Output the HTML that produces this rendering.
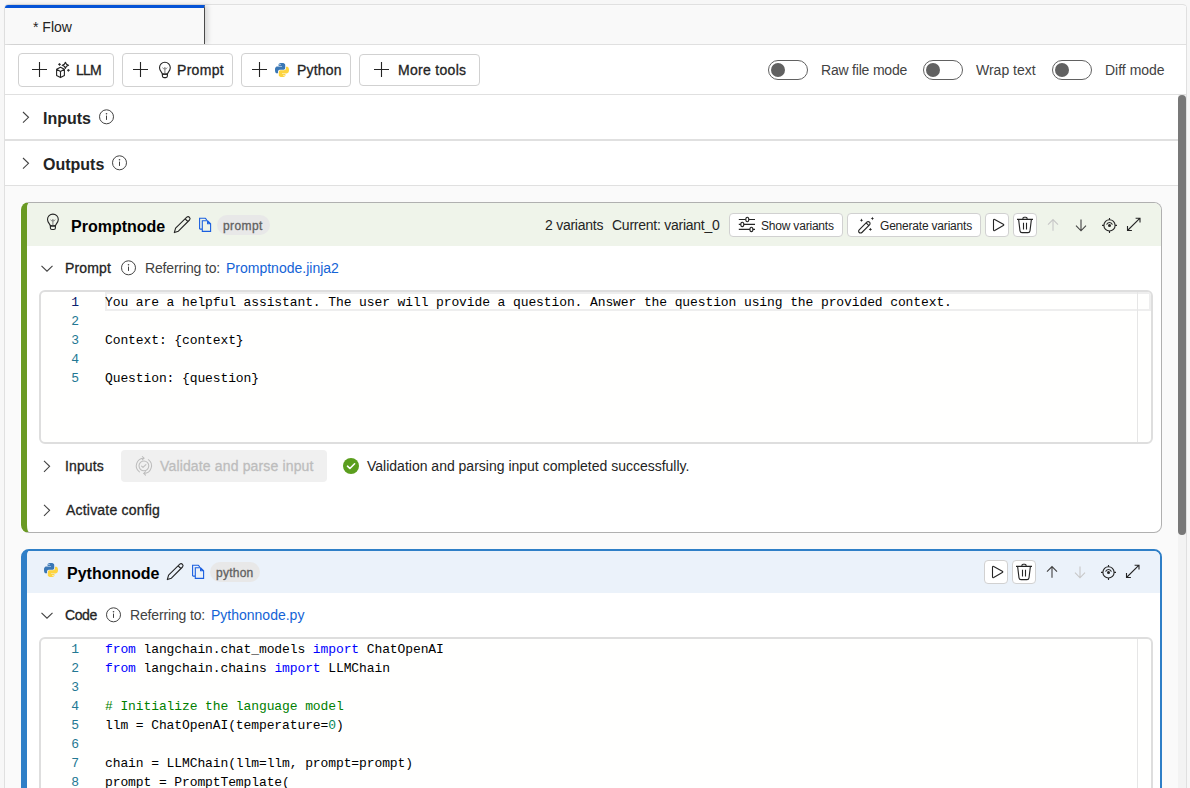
<!DOCTYPE html>
<html><head><meta charset="utf-8">
<style>
*{box-sizing:border-box;margin:0;padding:0}
html,body{width:1190px;height:788px;overflow:hidden;background:#f7f7f7;font-family:"Liberation Sans",sans-serif;color:#242424;position:relative}
.a{position:absolute}
.t{position:absolute;white-space:nowrap;line-height:1;font-size:14px}
.b16{font-size:16px;font-weight:bold;color:#242424}
.s12{font-size:12px}
.sb{-webkit-text-stroke:0.3px currentColor}
svg{position:absolute;overflow:visible}
.btn{position:absolute;border:1px solid #d1d1d1;border-radius:4px;background:#fff}
.tg{position:absolute;top:60px;width:40px;height:20px;border:1px solid #616161;border-radius:10px;background:#fff}
.tg::after{content:"";position:absolute;left:2px;top:2px;width:14px;height:14px;border-radius:50%;background:#616161}
.mono{position:absolute;white-space:pre;font-family:"Liberation Mono",monospace;font-size:13px;line-height:19px;letter-spacing:-0.103px;color:#000}
.ln{position:absolute;white-space:pre;font-family:"Liberation Mono",monospace;font-size:13px;line-height:19px;letter-spacing:-0.103px;color:#237893;text-align:right;width:40px}
.kw{color:#0000ff}.cm{color:#008000}.nu{color:#098658}
.badge{position:absolute;height:20px;border-radius:10px;background:#e8e8e8}
.lnk{color:#1463d6}
</style></head><body>
<!-- outer frame -->
<div class="a" style="left:4px;top:4px;width:1183px;height:800px;border:1px solid #e0e0e0;border-radius:4px 4px 0 0;background:#fafafa"></div>
<!-- tab bar -->
<div class="a" style="left:5px;top:6px;width:1181px;height:38px;background:#f9f9f9"></div>
<div class="a" style="left:5px;top:44px;width:1181px;height:1px;background:#e0e0e0"></div>
<div class="a" style="left:5px;top:5px;width:200px;height:39px;background:#f9f9f9;border-top:3px solid #0553d6;border-right:1px solid #4a4a4a;border-top-left-radius:3px;box-shadow:3px 0 5px rgba(0,0,0,.13)"></div>
<div class="t" style="left:33px;top:20px;color:#242424">* Flow</div>
<!-- toolbar -->
<div class="a" style="left:5px;top:45px;width:1181px;height:49px;background:#fff"></div>
<div class="a" style="left:5px;top:94px;width:1181px;height:1px;background:#e0e0e0"></div>

<div class="btn" style="left:18px;top:53px;width:96px;height:34px"></div>
<div class="btn" style="left:122px;top:53px;width:111px;height:34px"></div>
<div class="btn" style="left:241px;top:53px;width:110px;height:34px"></div>
<div class="btn" style="left:359px;top:54px;width:121px;height:32px"></div>
<!-- plus icons -->
<svg style="left:32px;top:62px" width="15" height="15"><path d="M7.5 0V15M0 7.5H15" stroke="#242424" stroke-width="1.1"/></svg>
<svg style="left:133px;top:62px" width="15" height="15"><path d="M7.5 0V15M0 7.5H15" stroke="#242424" stroke-width="1.1"/></svg>
<svg style="left:252px;top:62px" width="15" height="15"><path d="M7.5 0V15M0 7.5H15" stroke="#242424" stroke-width="1.1"/></svg>
<svg style="left:374px;top:62px" width="15" height="15"><path d="M7.5 0V15M0 7.5H15" stroke="#242424" stroke-width="1.1"/></svg>
<!-- LLM cube icon -->
<svg style="left:52px;top:58px" width="24" height="24"><g fill="none" stroke="#242424" stroke-width="1.1" stroke-linejoin="round"><path d="M8.5 9.2L4.6 11.3V17.5L8.5 19.6L12.4 17.5V11.3Z M4.6 11.3L8.5 13.4L12.4 11.3 M8.5 13.4V19.6"/><path d="M13.4 4.2Q13.9 6.8 16.6 7.3Q13.9 7.8 13.4 10.5Q12.9 7.8 10.2 7.3Q12.9 6.8 13.4 4.2Z"/></g><path d="M7.5 5.1Q7.7 6.2 8.8 6.4Q7.7 6.6 7.5 7.7Q7.3 6.6 6.2 6.4Q7.3 6.2 7.5 5.1Z M16.4 11Q16.6 12.1 17.7 12.3Q16.6 12.5 16.4 13.6Q16.2 12.5 15.1 12.3Q16.2 12.1 16.4 11Z" fill="#242424" stroke="#242424" stroke-width=".5"/></svg>
<!-- bulb icon toolbar -->
<svg style="left:153px;top:58px" width="24" height="24"><g fill="none" stroke="#242424" stroke-width="1.1"><path d="M9.4 16.1C9.2 14.2 6.5 12.8 6.5 9.7A5.4 5.4 0 0 1 17.3 9.7C17.3 12.8 14.6 14.2 14.4 16.1Z"/><path d="M9.4 16.1H14.4V18.1Q14.4 19.6 12.8 19.6H11Q9.4 19.6 9.4 18.1Z"/><path d="M11.9 9V15.6" stroke="#777" stroke-width="1"/><path d="M9.6 9.6Q10 11 11.9 11Q13.8 11 14.2 9.6" stroke="#777" stroke-width=".9"/></g></svg>
<!-- python logo toolbar -->
<svg style="left:274px;top:62px" width="16" height="16" viewBox="0 0 16 16"><path d="M7.9 1C4.5 1 4.6 2.5 4.6 2.5V4.1H8V4.6H3.2C3.2 4.6 1 4.4 1 7.9C1 11.4 2.9 11.3 2.9 11.3H4V9.7C4 9.7 3.9 7.8 5.9 7.8H9.4C9.4 7.8 11.2 7.8 11.2 6V3C11.2 3 11.5 1 7.9 1Z" fill="#3a77b5"/><circle cx="6" cy="2.6" r=".55" fill="#fff"/><path d="M8.1 15C11.5 15 11.4 13.5 11.4 13.5V11.9H8V11.4H12.8C12.8 11.4 15 11.6 15 8.1C15 4.6 13.1 4.7 13.1 4.7H12V6.3C12 6.3 12.1 8.2 10.1 8.2H6.6C6.6 8.2 4.8 8.2 4.8 10V13C4.8 13 4.5 15 8.1 15Z" fill="#fdd43f"/><circle cx="10" cy="13.4" r=".55" fill="#fff"/></svg>

<div class="t sb" style="left:76px;top:63px;letter-spacing:-0.8px">LLM</div>
<div class="t sb" style="left:177px;top:63px;letter-spacing:0.3px">Prompt</div>
<div class="t sb" style="left:297px;top:63px;letter-spacing:0.2px">Python</div>
<div class="t sb" style="left:398px;top:63px;letter-spacing:0.3px">More tools</div>

<div class="tg" style="left:768px"></div><div class="t" style="left:821px;top:63px;color:#424242;letter-spacing:-0.2px">Raw file mode</div>
<div class="tg" style="left:923px"></div><div class="t" style="left:976px;top:63px;color:#424242">Wrap text</div>
<div class="tg" style="left:1052px"></div><div class="t" style="left:1105px;top:63px;color:#424242">Diff mode</div>

<!-- inputs / outputs rows -->
<div class="a" style="left:5px;top:95px;width:1173px;height:44px;background:#fff"></div>
<div class="a" style="left:5px;top:139px;width:1173px;height:2px;background:#e0e0e0"></div>
<div class="a" style="left:5px;top:141px;width:1173px;height:44px;background:#fff"></div>
<div class="a" style="left:5px;top:185px;width:1173px;height:1px;background:#e0e0e0"></div>
<svg style="left:22px;top:111px" width="8" height="13"><path d="M1 1L6.5 6.3L1 11.6" fill="none" stroke="#424242" stroke-width="1.1"/></svg>
<svg style="left:22px;top:157px" width="8" height="13"><path d="M1 1L6.5 6.3L1 11.6" fill="none" stroke="#424242" stroke-width="1.1"/></svg>
<div class="t b16" style="left:43px;top:111px">Inputs</div>
<div class="t b16" style="left:43px;top:157px">Outputs</div>
<svg style="left:98px;top:109px" width="16" height="16"><circle cx="8.5" cy="7.8" r="7" fill="none" stroke="#424242" stroke-width="1"/><path d="M8.5 6.6V10.9" stroke="#424242" stroke-width="1"/><circle cx="8.5" cy="4.8" r=".8" fill="#424242"/></svg>
<svg style="left:111px;top:155px" width="16" height="16"><circle cx="8.5" cy="7.8" r="7" fill="none" stroke="#424242" stroke-width="1"/><path d="M8.5 6.6V10.9" stroke="#424242" stroke-width="1"/><circle cx="8.5" cy="4.8" r=".8" fill="#424242"/></svg>

<!-- scrollbar -->
<div class="a" style="left:1178px;top:95px;width:8px;height:700px;background:#f3f3f3"></div>
<div class="a" style="left:1178px;top:95px;width:8px;height:440px;background:#787878;border-radius:4px"></div>


<!-- PROMPT CARD -->
<div class="a" style="left:21px;top:202px;width:1141px;height:331px;border:1px solid #b0b0b0;border-left:6px solid #6a9a23;border-radius:8px;background:#fff;overflow:hidden;box-shadow:-1px 0 0 #fff">
  <div class="a" style="left:0;top:0;width:1140px;height:43px;background:#eff4ea"></div>
</div>
<!-- header -->
<svg style="left:41px;top:210px" width="24" height="24"><g fill="none" stroke="#242424" stroke-width="1.1"><path d="M9.4 15.9C9.2 14 6.5 12.6 6.5 9.5A5.4 5.4 0 0 1 17.3 9.5C17.3 12.6 14.6 14 14.4 15.9Z"/><path d="M9.4 15.9H14.4V17.9Q14.4 19.5 12.8 19.5H11Q9.4 19.5 9.4 17.9Z"/><path d="M11.9 9V15.4" stroke="#777" stroke-width="1"/><path d="M9.6 9.6Q10 11 11.9 11Q13.8 11 14.2 9.6" stroke="#777" stroke-width=".9"/></g></svg>
<div class="t b16" style="left:71px;top:219px;color:#000">Promptnode</div>
<svg style="left:172px;top:215px" width="20" height="20"><path d="M2.3 17.6L3.6 13.2L14.8 2.2Q16.2 1 17.5 2.3Q18.7 3.7 17.5 5L6.4 16.2Z M13.2 3.9L15.8 6.5" fill="none" stroke="#242424" stroke-width="1.1" stroke-linejoin="round"/></svg>
<svg style="left:196px;top:215px" width="20" height="20"><path d="M3.6 14.1V3.3H9.3L10.8 4.8 M3.6 14.1H6.3 M6.3 5.8H11.6L14.6 8.8V16.4H6.3Z M11.6 5.8V8.8H14.6" fill="none" stroke="#1a5fe0" stroke-width="1.1"/></svg>
<div class="badge" style="left:217px;top:215px;width:53px"></div>
<div class="t s12 sb" style="left:223px;top:220px;color:#616161;letter-spacing:0.4px">prompt</div>

<div class="t" style="left:545px;top:218px;letter-spacing:-0.25px">2 variants</div>
<div class="t" style="left:612px;top:218px;letter-spacing:-0.25px">Current: variant_0</div>
<div class="btn" style="left:729px;top:213px;width:114px;height:24px"></div>
<svg style="left:735px;top:212px" width="24" height="24"><g fill="none" stroke="#242424" stroke-width="1.1"><path d="M3.8 7.5H10.8M13.8 7.5H20M3.8 12.4H5.8M8.8 12.4H20M3.8 17.4H14.9M17.9 17.4H20"/><ellipse cx="12.3" cy="7.5" rx="1.5" ry="2.2"/><ellipse cx="7.3" cy="12.4" rx="1.5" ry="2.2"/><ellipse cx="16.4" cy="17.4" rx="1.5" ry="2.2"/></g></svg>
<div class="t s12" style="left:761px;top:220px;letter-spacing:-0.2px">Show variants</div>
<div class="btn" style="left:847px;top:213px;width:134px;height:24px"></div>
<svg style="left:854px;top:213px" width="24" height="24"><g fill="none" stroke="#242424" stroke-width="1.1"><path d="M5.2 16.8L12.8 9.2A1.9 1.9 0 0 1 15.5 11.9L7.9 19.5A1.9 1.9 0 0 1 5.2 16.8Z M12.4 10.2L14.6 12.4"/></g><path d="M7.5 5.6L8.05 6.75L9.2 7.3L8.05 7.85L7.5 9.0L6.95 7.85L5.8 7.3L6.95 6.75ZM18.4 3.8L18.95 4.95L20.099999999999998 5.5L18.95 6.05L18.4 7.2L17.849999999999998 6.05L16.7 5.5L17.849999999999998 4.95ZM16.4 14.7L16.95 15.849999999999998L18.099999999999998 16.4L16.95 16.95L16.4 18.099999999999998L15.849999999999998 16.95L14.7 16.4L15.849999999999998 15.849999999999998Z" fill="#242424"/></svg>
<div class="t s12" style="left:880px;top:220px;letter-spacing:-0.2px">Generate variants</div>
<div class="btn" style="left:985px;top:213px;width:24px;height:24px"></div>
<svg style="left:985px;top:213px" width="24" height="24"><path d="M8.5 7.2Q8.5 5.9 9.7 6.5L18.3 11.3Q19.3 12 18.3 12.6L9.7 17.5Q8.5 18.1 8.5 16.8Z" fill="none" stroke="#242424" stroke-width="1.1" stroke-linejoin="round"/></svg>
<div class="btn" style="left:1013px;top:213px;width:24px;height:24px"></div>
<svg style="left:1013px;top:213px" width="24" height="24"><g fill="none" stroke="#242424" stroke-width="1.1"><path d="M4 6.4H20M9.9 6.4V5.4Q9.9 4.2 11.1 4.2H12.9Q14.1 4.2 14.1 5.4V6.4M5.6 6.4L7 17.8Q7.3 19.6 9 19.6H15Q16.7 19.6 17 17.8L18.4 6.4M10.5 9.7V16.4M13.5 9.7V16.4"/></g></svg>
<svg style="left:1041px;top:213px" width="24" height="24"><path d="M12 6.5V17.8M7 11.6L12 6.5L17 11.6" fill="none" stroke="#c7c7c7" stroke-width="1.1"/></svg>
<svg style="left:1069px;top:213px" width="24" height="24"><path d="M12 6.5V17.8M7 12.7L12 17.8L17 12.7" fill="none" stroke="#424242" stroke-width="1.1"/></svg>
<svg style="left:1097px;top:213px" width="24" height="24"><g fill="none" stroke="#242424" stroke-width="1.1"><circle cx="12.5" cy="12.4" r="5.6"/><path d="M12.5 4.9V6.8M12.5 18V19.9M5 12.4H6.9M18.1 12.4H20M9.6 11.7A3 3 0 0 1 15.4 11.7"/></g><circle cx="12.5" cy="12.4" r="1.5" fill="#242424"/></svg>
<svg style="left:1125px;top:213px" width="24" height="24"><path d="M2.3 17.3L14.8 5M2.3 12.9V17.3H6.7M10.4 5H14.8V9.4" fill="none" stroke="#242424" stroke-width="1.1" transform="translate(0.2,0.2)"/></svg>

<!-- prompt section -->
<svg style="left:40px;top:262px" width="14" height="12"><path d="M1.5 3.8L7 9.2L12.5 3.8" fill="none" stroke="#424242" stroke-width="1.1"/></svg>
<div class="t sb" style="left:65px;top:261px;letter-spacing:0.15px">Prompt</div>
<svg style="left:120px;top:260px" width="16" height="16"><circle cx="8.5" cy="7.8" r="7" fill="none" stroke="#424242" stroke-width="1"/><path d="M8.5 6.6V10.9" stroke="#424242" stroke-width="1"/><circle cx="8.5" cy="4.8" r=".8" fill="#424242"/></svg>
<div class="t" style="left:145px;top:261px;color:#424242;letter-spacing:-0.15px">Referring to:</div>
<div class="t lnk" style="left:226px;top:261px">Promptnode.jinja2</div>
<!-- editor -->
<div class="a" style="left:39px;top:290px;width:1114px;height:154px;border:2px solid #dedede;border-radius:6px;background:#fffffe;overflow:hidden">
  <div class="a" style="left:64px;top:0;width:1046px;height:19px;border:2px solid #eeeeee"></div>
  <div class="a" style="left:1096px;top:0;width:1px;height:152px;background:#e6e6e6"></div>
</div>
<div class="ln" style="left:39px;top:293px"><span style="color:#0b216f">1</span>
2
3
4
5</div>
<div class="mono" style="left:105px;top:293px">You are a helpful assistant. The user will provide a question. Answer the question using the provided context.

Context: {context}

Question: {question}</div>
<!-- inputs row -->
<svg style="left:42px;top:460px" width="10" height="13"><path d="M2 0.8L7.6 6.3L2 11.8" fill="none" stroke="#424242" stroke-width="1.1"/></svg>
<div class="t sb" style="left:65px;top:459px;letter-spacing:0.1px">Inputs</div>
<div class="a" style="left:121px;top:450px;width:206px;height:32px;background:#f0f0f0;border-radius:4px"></div>
<svg style="left:132px;top:454px" width="24" height="24"><g fill="none" stroke="#bdbdbd" stroke-width="1.05" stroke-linecap="round" stroke-linejoin="round"><path d="M11.9 4.2A7.6 7.6 0 0 0 7.4 17.9"/><path d="M10.3 2.5L12 4.2L10.3 5.9"/><path d="M16.4 5.7A7.6 7.6 0 0 1 11.9 19.4"/><path d="M13.5 17.7L11.8 19.4L13.5 21.1"/><circle cx="11.9" cy="11.8" r="4.9"/><path d="M9.6 12.1L11 13.4L13.9 10.6"/></g></svg>
<div class="t sb" style="left:160px;top:459px;color:#bdbdbd;letter-spacing:0.15px">Validate and parse input</div>
<svg style="left:343px;top:458px" width="16" height="16"><circle cx="8" cy="8" r="8" fill="#5b9e1e"/><path d="M4.5 8.2L6.9 10.5L11.6 5.8" fill="none" stroke="#fff" stroke-width="1.6" stroke-linecap="round" stroke-linejoin="round"/></svg>
<div class="t" style="left:367px;top:459px">Validation and parsing input completed successfully.</div>
<!-- activate config -->
<svg style="left:42px;top:504px" width="10" height="13"><path d="M2 0.8L7.6 6.3L2 11.8" fill="none" stroke="#424242" stroke-width="1.1"/></svg>
<div class="t sb" style="left:66px;top:503px;letter-spacing:0.2px">Activate config</div>

<!-- PYTHON CARD -->
<div class="a" style="left:21px;top:549px;width:1141px;height:260px;border:2px solid #2f7fc7;border-left:6px solid #2f7fc7;border-radius:8px;background:#fff;overflow:hidden">
  <div class="a" style="left:0;top:0;width:1140px;height:42px;background:#ebf2fa"></div>
</div>
<svg style="left:43px;top:562px" width="16" height="16" viewBox="0 0 16 16"><path d="M7.9 1C4.5 1 4.6 2.5 4.6 2.5V4.1H8V4.6H3.2C3.2 4.6 1 4.4 1 7.9C1 11.4 2.9 11.3 2.9 11.3H4V9.7C4 9.7 3.9 7.8 5.9 7.8H9.4C9.4 7.8 11.2 7.8 11.2 6V3C11.2 3 11.5 1 7.9 1Z" fill="#3a77b5"/><circle cx="6" cy="2.6" r=".55" fill="#fff"/><path d="M8.1 15C11.5 15 11.4 13.5 11.4 13.5V11.9H8V11.4H12.8C12.8 11.4 15 11.6 15 8.1C15 4.6 13.1 4.7 13.1 4.7H12V6.3C12 6.3 12.1 8.2 10.1 8.2H6.6C6.6 8.2 4.8 8.2 4.8 10V13C4.8 13 4.5 15 8.1 15Z" fill="#fdd43f"/><circle cx="10" cy="13.4" r=".55" fill="#fff"/></svg>
<div class="t b16" style="left:67px;top:566px;color:#000">Pythonnode</div>
<svg style="left:165px;top:562px" width="20" height="20"><path d="M2.3 17.6L3.6 13.2L14.8 2.2Q16.2 1 17.5 2.3Q18.7 3.7 17.5 5L6.4 16.2Z M13.2 3.9L15.8 6.5" fill="none" stroke="#242424" stroke-width="1.1" stroke-linejoin="round"/></svg>
<svg style="left:189px;top:562px" width="20" height="20"><path d="M3.6 14.1V3.3H9.3L10.8 4.8 M3.6 14.1H6.3 M6.3 5.8H11.6L14.6 8.8V16.4H6.3Z M11.6 5.8V8.8H14.6" fill="none" stroke="#1a5fe0" stroke-width="1.1"/></svg>
<div class="badge" style="left:210px;top:562px;width:50px"></div>
<div class="t s12 sb" style="left:216px;top:567px;color:#616161;letter-spacing:0.25px">python</div>

<div class="btn" style="left:984px;top:560px;width:24px;height:24px"></div>
<svg style="left:984px;top:560px" width="24" height="24"><path d="M8.5 7.2Q8.5 5.9 9.7 6.5L18.3 11.3Q19.3 12 18.3 12.6L9.7 17.5Q8.5 18.1 8.5 16.8Z" fill="none" stroke="#242424" stroke-width="1.1" stroke-linejoin="round"/></svg>
<div class="btn" style="left:1012px;top:560px;width:24px;height:24px"></div>
<svg style="left:1012px;top:560px" width="24" height="24"><g fill="none" stroke="#242424" stroke-width="1.1"><path d="M4 6.4H20M9.9 6.4V5.4Q9.9 4.2 11.1 4.2H12.9Q14.1 4.2 14.1 5.4V6.4M5.6 6.4L7 17.8Q7.3 19.6 9 19.6H15Q16.7 19.6 17 17.8L18.4 6.4M10.5 9.7V16.4M13.5 9.7V16.4"/></g></svg>
<svg style="left:1040px;top:560px" width="24" height="24"><path d="M12 6.5V17.8M7 11.6L12 6.5L17 11.6" fill="none" stroke="#424242" stroke-width="1.1"/></svg>
<svg style="left:1068px;top:560px" width="24" height="24"><path d="M12 6.5V17.8M7 12.7L12 17.8L17 12.7" fill="none" stroke="#c7c7c7" stroke-width="1.1"/></svg>
<svg style="left:1096px;top:560px" width="24" height="24"><g fill="none" stroke="#242424" stroke-width="1.1"><circle cx="12.5" cy="12.4" r="5.6"/><path d="M12.5 4.9V6.8M12.5 18V19.9M5 12.4H6.9M18.1 12.4H20M9.6 11.7A3 3 0 0 1 15.4 11.7"/></g><circle cx="12.5" cy="12.4" r="1.5" fill="#242424"/></svg>
<svg style="left:1124px;top:560px" width="24" height="24"><path d="M2.3 17.3L14.8 5M2.3 12.9V17.3H6.7M10.4 5H14.8V9.4" fill="none" stroke="#242424" stroke-width="1.1" transform="translate(0.2,0.2)"/></svg>

<!-- code section -->
<svg style="left:40px;top:609px" width="14" height="12"><path d="M1.5 3.8L7 9.2L12.5 3.8" fill="none" stroke="#424242" stroke-width="1.1"/></svg>
<div class="t sb" style="left:65px;top:608px;letter-spacing:-0.4px">Code</div>
<svg style="left:105px;top:607px" width="16" height="16"><circle cx="8.5" cy="7.8" r="7" fill="none" stroke="#424242" stroke-width="1"/><path d="M8.5 6.6V10.9" stroke="#424242" stroke-width="1"/><circle cx="8.5" cy="4.8" r=".8" fill="#424242"/></svg>
<div class="t" style="left:130px;top:608px;color:#424242;letter-spacing:-0.15px">Referring to:</div>
<div class="t lnk" style="left:211px;top:608px">Pythonnode.py</div>
<div class="a" style="left:39px;top:637px;width:1114px;height:200px;border:2px solid #dedede;border-radius:6px;background:#fffffe;overflow:hidden">
  <div class="a" style="left:1096px;top:0;width:1px;height:200px;background:#e6e6e6"></div>
</div>
<div class="ln" style="left:39px;top:640px">1
2
3
4
5
6
7
8</div>
<div class="mono" style="left:105px;top:640px"><span class="kw">from</span> langchain.chat_models <span class="kw">import</span> ChatOpenAI
<span class="kw">from</span> langchain.chains <span class="kw">import</span> LLMChain

<span class="cm"># Initialize the language model</span>
llm = ChatOpenAI(temperature=<span class="nu">0</span>)

chain = LLMChain(llm=llm, prompt=prompt)
prompt = PromptTemplate(</div>
</body></html>
